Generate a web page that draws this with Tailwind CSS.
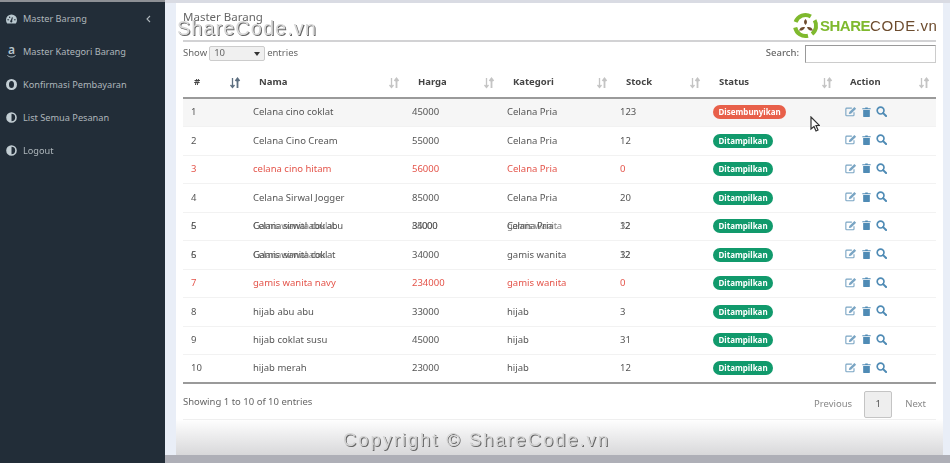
<!DOCTYPE html>
<html lang="en">
<head>
    <meta charset="UTF-8">
    <meta name="viewport" content="width=device-width, initial-scale=1.0">
    <title>Master Barang</title>
    <script src="https://cdn.jsdelivr.net/npm/@tailwindcss/browser@4"></script>
</head>
<body class="bg-[#e9eef7] font-['Noto_Sans',sans-serif] text-[#555] overflow-hidden">
    <svg class="hidden">
        <symbol id="sort" viewBox="0 0 12 12">
            <path d="M3.5 1v9M1.5 8l2 2.500 2-2.500" fill="none" stroke="currentColor" stroke-width="1.300"/>
            <path d="M8.500 11V2M6.500 4l2-2.500 2 2.500" fill="none" stroke="currentColor" stroke-width="1.800"/>
        </symbol>
        <symbol id="edit" viewBox="0 0 14 12">
            <path d="M10.500 7v3a1 1 0 0 1-1 1H2a1 1 0 0 1-1-1V3a1 1 0 0 1 1-1h6" fill="none" stroke="currentColor" stroke-width="1.300"/>
            <path d="M5 6.500 11 .8l2 2L7 8.500l-2.500.5z" fill="currentColor"/>
        </symbol>
        <symbol id="trash" viewBox="0 0 10 12">
            <path d="M3.500 1.500V.5h3v1H10v1.200H0V1.500zM1 3.500h8V11a1 1 0 0 1-1 1H2a1 1 0 0 1-1-1z" fill="currentColor"/>
        </symbol>
        <symbol id="search" viewBox="0 0 12 12">
            <circle cx="5" cy="5" r="3.700" fill="none" stroke="currentColor" stroke-width="1.800"/>
            <path d="M7.800 7.800 11 11" stroke="currentColor" stroke-width="2.200" stroke-linecap="round"/>
        </symbol>
    </svg>

    <div class="relative flex h-[463px] w-[950px] blur-[0.5px]">
        <aside class="w-[165px] shrink-0 bg-[#222d38] text-[#aeb6bb] text-[9.200px] border-t-2 border-[#8d9095]">
            <ul>
                <li class="flex h-[33px] items-center gap-[6px] pl-[6px] pr-[14px]">
                    <svg class="w-[11px] h-[10px] text-[#b8c7ce]" viewBox="0 0 12 10"><path fill-rule="evenodd" d="M6 0a6 6 0 0 1 6 6c0 1.500-.5 2.800-1.300 4H1.300C.5 8.800 0 7.500 0 6a6 6 0 0 1 6-6zM6.500 3 5.300 6.300a1.200 1.200 0 1 0 1.400.4L7.500 3.300zM2.300 5a.8.8 0 1 0 0 1.600.8.8 0 0 0 0-1.600zm7.400 0a.8.8 0 1 0 0 1.600.8.8 0 0 0 0-1.600zM4 2.300a.8.8 0 1 0 0 1.600.8.8 0 0 0 0-1.600z" fill="currentColor"/></svg>
                    <span class="flex-1">Master Barang</span>
                    <svg class="w-[5px] h-[8px]" viewBox="0 0 5 8"><path d="M4 1 1 4l3 3" fill="none" stroke="currentColor" stroke-width="1.100"/></svg>
                </li>
                <li class="flex h-[33px] items-center gap-[6px] pl-[6px]">
                    <span class="flex flex-col items-center w-[11px] text-[#b8c7ce]">
                        <span class="text-[12px] leading-[10px] font-semibold">a</span>
                        <svg class="w-[9px] h-[3px]" viewBox="0 0 9 3"><path d="M.5.5c2.500 2 5.500 2 8 0" fill="none" stroke="currentColor" stroke-width="1"/></svg>
                    </span>
                    <span>Master Kategori Barang</span>
                </li>
                <li class="flex h-[33px] items-center gap-[6px] pl-[6px]">
                    <span class="w-[11px] h-[11px] rounded-full border-2 border-x-[3px] border-[#c3ced4]"></span>
                    <span>Konfirmasi Pembayaran</span>
                </li>
                <li class="flex h-[33px] items-center gap-[6px] pl-[6px]">
                    <svg class="w-[11px] h-[11px] text-[#c3ced4]" viewBox="0 0 11 11"><circle cx="5.500" cy="5.500" r="4.500" fill="none" stroke="currentColor" stroke-width="1.600"/><path d="M5.500 1a4.500 4.500 0 0 0 0 9z" fill="currentColor"/></svg>
                    <span>List Semua Pesanan</span>
                </li>
                <li class="flex h-[33px] items-center gap-[6px] pl-[6px]">
                    <svg class="w-[11px] h-[11px] text-[#c3ced4]" viewBox="0 0 11 11"><circle cx="5.500" cy="5.500" r="4.500" fill="none" stroke="currentColor" stroke-width="1.600"/><path d="M5.500 1a4.500 4.500 0 0 0 0 9z" fill="currentColor"/></svg>
                    <span>Logout</span>
                </li>
            </ul>
        </aside>

        <main class="flex-1 flex flex-col">
            <div class="h-[3px] bg-[#d9dbe3]"></div>
            <div class="ml-[11px] mr-[7px] h-[452px] px-[7px] bg-linear-to-b from-white from-[92%] to-[#d8d8da]">
                <h1 class="h-[39px] pt-[6px] text-[11.500px] leading-[16px] border-b-2 border-[#d2d2d4] text-[#666]">Master Barang</h1>

                <div class="flex items-center h-[21px] mt-[1px] text-[9.500px] text-[#666]">
                    <span>Show</span>
                    <span class="ml-[2px] mr-[2px] flex items-center justify-between w-[56px] h-[15px] px-[4px] bg-[#f0f0f0] border border-[#ccc] rounded-[2px]">10 <i class="border-x-[3px] border-t-[4px] border-x-transparent border-t-[#333]"></i></span>
                    <span>entries</span>
                    <span class="ml-auto mr-[6px] font-medium">Search:</span>
                    <span class="w-[131px] h-[18px] border border-[#ccc] border-l-[#999] border-t-[#999] bg-white"></span>
                </div>

                <table class="table-fixed w-[753px] mt-[4px] text-[9.500px]">
                    <colgroup>
                        <col class="w-[40px]"><col class="w-[24px]"><col class="w-[159px]"><col class="w-[95px]">
                        <col class="w-[113px]"><col class="w-[93px]"><col class="w-[132px]"><col class="w-[97px]">
                    </colgroup>
                    <thead>
                        <tr id="head" class="h-[30px] border-b-2 border-[#9a9a9a] text-[#444]"></tr>
                    </thead>
                    <tbody id="rows"></tbody>
                </table>

                <div class="flex items-center h-[36px] pt-[6px] border-b border-[#efefef] text-[9.500px] text-[#666]">
                    <span class="mb-[4px]">Showing 1 to 10 of 10 entries</span>
                    <span class="ml-auto text-[#888]">Previous</span>
                    <span class="ml-[12px] flex items-center justify-center w-[28px] h-[27px] bg-[#eeeeee] border border-[#c4c4c4] rounded-[2px] text-[#555]">1</span>
                    <span class="ml-[13px] mr-[10px] text-[#888]">Next</span>
                </div>
            </div>
            <div class="flex-1 bg-[#aeafb7]"></div>
        </main>

        <!-- watermarks and cursor sit on top of the page -->
        <div class="absolute left-[177px] top-[15px] text-[20px] leading-[26px] tracking-[1px] font-['Liberation_Sans',sans-serif] text-[#d9d9d9] [text-shadow:1px_1px_0_#666]">ShareCode.vn</div>
        <div class="absolute left-[343px] top-[429px] text-[18.500px] leading-[22px] tracking-[1.900px] font-['Liberation_Sans',sans-serif] text-[#d4d4d4] [text-shadow:1px_1px_0_#666]">Copyright © ShareCode.vn</div>

        <div class="absolute left-[792px] top-[12px] flex items-center">
            <svg class="w-[27px] h-[27px]" viewBox="0 0 27 27">
                <path d="M3.600 10A10.500 10.500 0 0 1 18.800 4.400" fill="none" stroke="#7fb92e" stroke-width="4"/>
                <path d="M22.600 8.200A10.500 10.500 0 0 1 20 22" fill="none" stroke="#7fb92e" stroke-width="4"/>
                <path d="M16 23.700A10.500 10.500 0 0 1 3.200 15.500" fill="none" stroke="#7fb92e" stroke-width="4"/>
                <path d="M13.500 7c2 2 2 4 0 6-2-2-2-4 0-6zM13 15c-1 3-3 4-6 3.500 1-3 3-4 6-3.500zM15 15c3-.5 5 .5 6 3.500-3 .5-5-.5-6-3.500z" fill="#6d4c2e"/>
            </svg>
            <span class="ml-[1px] text-[15px] leading-[22px] tracking-[-0.5px] font-['Liberation_Sans',sans-serif] font-bold text-[#7fb92e]">SHARE</span><span class="text-[15px] leading-[22px] tracking-[0.6px] font-['Liberation_Sans',sans-serif] text-[#6d4c2e]">CODE.vn</span>
        </div>

        <svg class="absolute left-[810px] top-[116px] w-[10px] h-[16px]" viewBox="0 0 10 16"><path d="M1 1v12l3-2.500 2 4.500 2-1-2-4.500h3.500z" fill="#fff" stroke="#333" stroke-width="1.200"/></svg>
    </div>

    <script>
        const headers = [
            ['#', 'pl-[11px]', false],
            ['', '', true],
            ['Nama', 'pl-[12px]', true],
            ['Harga', 'pl-[12px]', true],
            ['Kategori', 'pl-[12px]', true],
            ['Stock', 'pl-[12px]', true],
            ['Status', 'pl-[12px]', true],
            ['Action', 'pl-[11px]', true]
        ];

        document.getElementById('head').innerHTML = headers.map(([label, pad, sortable], i) => `
            <th class="relative text-left font-bold ${pad}">${label}
                ${sortable ? `<svg class="absolute top-[9px] ${i === 1 ? 'left-[6px] text-[#5d6f80]' : 'right-[6px] text-[#c4c4c4]'} w-[12px] h-[12px]"><use href="#sort"/></svg>` : ''}
            </th>`).join('');

        const stack = (a, b) => `<span class="inline-grid tracking-[-0.4px]"><span class="[grid-area:1/1]">${a}</span><span class="[grid-area:1/1] opacity-70">${b}</span></span>`;

        const data = [
            ['1', 'Celana cino coklat', '45000', 'Celana Pria', '123', 0, 0],
            ['2', 'Celana Cino Cream', '55000', 'Celana Pria', '12', 1, 0],
            ['3', 'celana cino hitam', '56000', 'Celana Pria', '0', 1, 1],
            ['4', 'Celana Sirwal Jogger', '85000', 'Celana Pria', '20', 1, 0],
            [stack('5', '6'), stack('Celana sirwal abu abu', 'Gamis wanita coklat'), stack('34000', '85000'), stack('Celana Pria', 'gamis wanita'), stack('12', '32'), 1, 0],
            [stack('6', '5'), stack('Gamis wanita coklat', 'Celana sirwal abu'), '34000', 'gamis wanita', stack('32', '12'), 1, 0],
            ['7', 'gamis wanita navy', '234000', 'gamis wanita', '0', 1, 1],
            ['8', 'hijab abu abu', '33000', 'hijab', '3', 1, 0],
            ['9', 'hijab coklat susu', '45000', 'hijab', '31', 1, 0],
            ['10', 'hijab merah', '23000', 'hijab', '12', 1, 0]
        ];

        document.getElementById('rows').innerHTML = data.map(([no, nama, harga, kategori, stock, shown, empty], i) => `
            <tr class="h-[28.5px] border-b border-[#f2f2f2] last:border-b-2 last:border-[#9a9a9a] ${i === 0 ? 'bg-[#f6f6f6]' : ''} ${empty ? 'text-[#e4544a]' : 'text-[#555]'}">
                <td class="pl-[8px]">${no}</td>
                <td></td>
                <td class="pl-[6px]">${nama}</td>
                <td class="pl-[6px]">${harga}</td>
                <td class="pl-[6px]">${kategori}</td>
                <td class="pl-[6px]">${stock}</td>
                <td class="pl-[6px]">
                    <span class="inline-block px-[5.500px] rounded-full text-[8px] leading-[14px] font-bold text-white ${shown ? 'bg-[#119a6c]' : 'bg-[#e8604a]'}">${shown ? 'Ditampilkan' : 'Disembunyikan'}</span>
                </td>
                <td class="pl-[6px]">
                    <span class="flex items-center mb-[2px] text-[#4f8bb5]">
                        <svg class="w-[12px] h-[11px] text-[#7aa5c4]"><use href="#edit"/></svg>
                        <svg class="ml-[5px] w-[9px] h-[10px]"><use href="#trash"/></svg>
                        <svg class="ml-[5px] w-[11px] h-[11px]"><use href="#search"/></svg>
                    </span>
                </td>
            </tr>`).join('');
    </script>
</body>
</html>
